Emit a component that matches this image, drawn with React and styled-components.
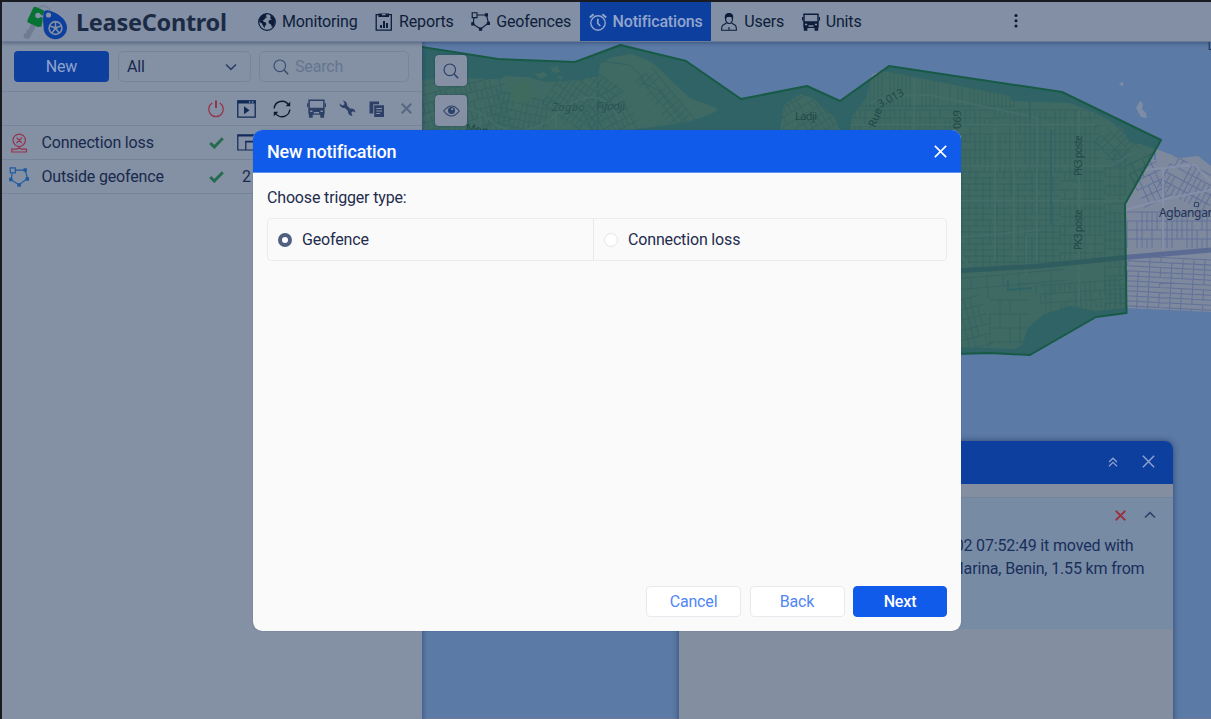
import React from "react";
import styled, { createGlobalStyle } from "styled-components";

const GlobalStyle = createGlobalStyle`
  * { box-sizing: border-box; }
  html, body { margin: 0; padding: 0; }
  body { font-family: Roboto, "Liberation Sans", sans-serif; font-size: 16px; letter-spacing: -0.16px; color: #18294d; overflow: hidden; }
  button, input { font: inherit; letter-spacing: inherit; }
  svg { display: block; flex: none; letter-spacing: 0; }
`;

const c = {
  panel: "#8490a4",
  line: "#75839b",
  ink: "#172a50",
  dark: "#0a1830",
  red: "#96334c",
  green: "#256b4e",
  blue: "#0d3f9e",
};

const Screen = styled.div`
  position: relative;
  width: 1211px;
  height: 719px;
  padding: 2px 0 0 2px;
  background: #1b1b1f;
  display: flex;
  flex-direction: column;
  overflow: hidden;
`;

const Header = styled.header`
  height: 40px;
  flex: none;
  display: flex;
  background: #838fa4;
  border-bottom: 1px solid #6c7b95;
  position: relative;
  z-index: 1;
  box-shadow: 0 1px 4px rgba(20, 40, 80, 0.45);
`;

const Brand = styled.div`
  width: 247px;
  display: flex;
  align-items: center;
  gap: 8px;
  padding-left: 20px;
`;

const BrandName = styled.span`
  font-family: "Noto Sans", sans-serif;
  font-weight: 700;
  font-size: 23.5px;
  line-height: 32px;
  letter-spacing: -0.28px;
  color: #1c2b45;
  margin-top: 1px;
`;

const Nav = styled.nav`
  display: flex;
  width: 620px;
`;

const NavItem = styled.a`
  display: flex;
  align-items: center;
  gap: 6px;
  padding: 0 8.5px 0 9px;
  height: 39px;
  color: ${(p) => (p.$active ? "#93a5cd" : "#0d1d3a")};
  background: ${(p) => (p.$active ? c.blue : "transparent")};
  font-weight: ${(p) => (p.$active ? 500 : 400)};
  white-space: nowrap;
`;

const More = styled.div`
  width: 294px;
  display: flex;
  align-items: center;
  justify-content: center;
  padding-bottom: 1px;
  color: ${c.dark};
`;

const Body = styled.div`
  flex: 1;
  display: flex;
  min-height: 0;
`;

const Side = styled.aside`
  width: 420px;
  flex: none;
  background: ${c.panel};
`;

const Toolbar = styled.div`
  height: 50px;
  display: flex;
  align-items: flex-start;
  padding: 9px 12px 0;
  border-bottom: 1px solid ${c.line};
`;

const NewButton = styled.button`
  width: 95px;
  height: 31px;
  padding: 0;
  border: 0;
  border-radius: 4px;
  background: ${c.blue};
  color: #8fa3cc;
`;

const Field = styled.div`
  width: ${(p) => p.$w}px;
  height: 31px;
  margin-left: ${(p) => p.$ml}px;
  padding: 0 ${(p) => p.$px}px;
  display: flex;
  align-items: center;
  gap: 6px;
  justify-content: ${(p) => (p.$spread ? "space-between" : "flex-start")};
  border: 1px solid #77859c;
  border-radius: 5px;
  color: ${(p) => (p.$muted ? "#66758f" : c.ink)};
`;

const Row = styled.div`
  display: flex;
  align-items: center;
  height: 34px;
  border-bottom: 1px solid ${c.line};
`;

const Lead = styled.div`
  width: 199px;
  display: flex;
  align-items: center;
  padding-left: 7px;
  gap: 12.5px;
`;

const Cell = styled.div`
  width: ${(p) => p.$w}px;
  display: flex;
  justify-content: center;
  color: ${(p) => p.$color || c.dark};
`;

const MapArea = styled.main`
  flex: 1;
  position: relative;
  background: #5b7aa5;
  overflow: hidden;
`;

const MapTools = styled.div`
  position: absolute;
  left: 13px;
  top: 13px;
  display: flex;
  flex-direction: column;
  gap: 9px;
`;

const MapButton = styled.div`
  width: 32px;
  height: 31px;
  border-radius: 4px;
  background: #8590a5;
  color: #2c4169;
  display: flex;
  align-items: center;
  justify-content: center;
  box-shadow: 0 0 2px rgba(20, 40, 80, 0.5);
`;

const SideShade = styled.div`
  position: absolute;
  left: 0;
  top: 0;
  bottom: 0;
  width: 5px;
  background: linear-gradient(to right, rgba(30, 50, 90, 0.3), transparent);
`;

const Alerts = styled.section`
  position: absolute;
  left: 257px;
  top: 399px;
  width: 493.5px;
  height: 300px;
  background: #838fa1;
  border-radius: 8px;
  box-shadow: 0 0 6px rgba(20, 40, 80, 0.6);
`;

const AlertsHead = styled.div`
  height: 43px;
  border-radius: 8px 8px 0 0;
  background: ${c.blue};
  color: #8fa3cc;
  display: flex;
  align-items: center;
  justify-content: flex-end;
  gap: 24px;
  padding: 0 18px 2px 0;
`;

const AlertCard = styled.article`
  margin-top: 13px;
  height: 132px;
  background: #788ba4;
  border-top: 1px solid #71849c;
  color: #182f5c;
`;

const AlertActions = styled.div`
  display: flex;
  justify-content: flex-end;
  align-items: center;
  gap: 17px;
  height: 36px;
  padding: 0 17px 2px 0;
`;

const AlertLine = styled.div`
  height: 22.5px;
  line-height: 23px;
  text-align: right;
  white-space: nowrap;
  padding-right: ${(p) => p.$pad}px;
`;

const Overlay = styled.div`
  position: absolute;
  inset: 0;
  z-index: 5;
  padding: 130px 0 0 253px;
`;

const Dialog = styled.div`
  width: 708px;
  height: 500.5px;
  border-radius: 9px;
  background: #fafafa;
  display: flex;
  flex-direction: column;
  overflow: hidden;
  box-shadow: 0 0 1px rgba(20, 40, 80, 0.6);
`;

const DialogHead = styled.div`
  height: 43px;
  background: #115bea;
  color: #fff;
  display: flex;
  align-items: center;
  justify-content: space-between;
  padding: 0 14px;
  font-size: 18px;
  font-weight: 500;
  border-bottom: 1px solid #5e92f2;
`;

const DialogBody = styled.div`
  flex: 1;
  padding: 14px 14px 0;
  color: #1f2c4d;
`;

const Question = styled.div`
  height: 31px;
  line-height: 21px;
`;

const Options = styled.div`
  display: flex;
  height: 43px;
  border: 1px solid #ececee;
  border-radius: 4px;
`;

const Option = styled.label`
  width: ${(p) => p.$w}px;
  display: flex;
  align-items: center;
  gap: 10px;
  padding-left: 10px;
  border-right: ${(p) => (p.$last ? "0" : "1px solid #e9e9ec")};
`;

const Radio = styled.span`
  width: 14px;
  height: 14px;
  border-radius: 50%;
  background: #fff;
  border: ${(p) => (p.$on ? "4px solid #4f6081" : "1px solid #e3e5ea")};
`;

const DialogFoot = styled.div`
  display: flex;
  justify-content: flex-end;
  gap: 8.5px;
  padding: 0 14px 13.5px;
`;

const Button = styled.button`
  width: ${(p) => (p.$primary ? 94 : 95)}px;
  height: 31.5px;
  padding: 0;
  border-radius: 4px;
  border: 1px solid ${(p) => (p.$primary ? "#115bea" : "#e8e9ee")};
  background: ${(p) => (p.$primary ? "#115bea" : "#fff")};
  color: ${(p) => (p.$primary ? "#fff" : "#5186f5")};
  font-weight: ${(p) => (p.$primary ? 500 : 400)};
`;

/* ---------- icons ---------- */

const Svg = ({ w = 18, h = w, vb, sw = 1.4, children }) => (
  <svg width={w} height={h} viewBox={vb || `0 0 ${w} ${h}`} fill="none" stroke="currentColor" strokeWidth={sw}>
    {children}
  </svg>
);

const Logo = () => (
  <svg width="46" height="36" viewBox="22 3 46 36">
    <circle cx="43" cy="13" r="8" fill="none" stroke="#76839a" strokeWidth="1.8" />
    <path d="M31 22L36 25L29 38L23.5 37L24 33L26.5 32L26.5 29L29 28Z" fill="#6e7b93" />
    <path d="M33.5 6.2Q34.5 5.5 36 6L44 9.5L41.5 25.5L38 26L28 21.5Q27 20.500 27.500 19Z" fill="#067233" />
    <circle cx="38" cy="14.5" r="2.8" fill="#8490a4" />
    <path d="M43.5 12.5Q44 9 47.5 9.2C57 11 67 18 67 26.5A11.7 11.7 0 0 1 43.6 26.5Q42.5 19 43.5 12.5Z" fill={c.blue} />
    <path d="M38 14.5L43 15.5" stroke="#8490a4" strokeWidth="2" />
    <circle cx="48.5" cy="14" r="2.6" fill="#8490a4" />
    <circle cx="55.5" cy="27" r="6.4" fill="none" stroke="#8490a4" strokeWidth="1.6" />
    <circle cx="55.5" cy="27" r="1.8" fill="#8490a4" />
    <path d="M55.5 27V21M55.5 27L61 25M55.5 27L59 32M55.5 27L52 32M55.5 27L50 25" stroke="#8490a4" strokeWidth="1.4" />
  </svg>
);

const GlobeIcon = () => (
  <Svg sw={1.2}>
    <circle cx="9" cy="9" r="8.3" />
    <path d="M1.2 7.500C1.800 4.500 4 1.600 7.500 1L9 1.800L7.500 3L9 4L7 5.500L6 7L4.500 7.300L5.500 8.500L8 9.800L8.400 11.500L7 13L6.500 15.200L5 12.800L3.500 10L1.200 9ZM11.500 1.500L14 2.500L16.600 6L17 9L15.800 12.800L14 14.200L13 11.500L10.800 10.200L10.500 8L12.200 6.800L14 6.500L12 5L12.800 3.600Z" fill="currentColor" stroke="none" />
  </Svg>
);
const ReportIcon = () => (
  <Svg sw={1.3}>
    <path d="M1.2 1.7H16.3V17.2H1.2Z" />
    <path d="M3.500 0.500H14V4H3.500ZM5 12H7V15H5ZM8 8H10V15H8ZM11 10H13V15H11Z" fill="currentColor" stroke="none" />
    <path d="M7 1.6H10.500" stroke={c.panel} />
  </Svg>
);
const GeofenceIcon = ({ size = 19 }) => (
  <svg width={size} height={size} viewBox="0 0 19 19" fill="none" stroke="currentColor" strokeWidth="1.1">
    <path d="M6 3H15.5L17.5 11L9.500 17L2 12L3 6" />
    <path d="M1.200 0.800H6V5.600H1.200Z" />
    <path d="M13.8 1.3H17V4.500H13.8ZM15.800 9.800H19V13H15.800ZM8 15.500H11.2V18.700H8ZM0.200 10.300H3.400V13.500H0.200Z" fill="currentColor" stroke="none" />
  </svg>
);
const AlarmIcon = () => (
  <Svg sw={1.4}>
    <circle cx="9" cy="10" r="7.2" />
    <path d="M8.8 5.8V10.5L11.3 13" strokeWidth="1.7" />
    <path d="M0.8 4.4L4.6 1.2M17.2 4.4L13.4 1.2" strokeWidth="2" />
  </Svg>
);
const UserIcon = () => (
  <Svg sw={1.1}>
    <path d="M5.6 6C5.6 2.5 6.5 1 9 1S12.4 2.5 12.4 6C12.4 8.5 11 10.5 9 10.5S5.6 8.5 5.6 6Z" />
    <path d="M5.4 5C5 2 6.5 0.5 9 0.5S13 2 12.6 5L11.5 3.500H7Z" fill="currentColor" />
    <path d="M6.5 10L2.8 12.2Q1.6 13 1.6 17.2H16.4Q16.400 13 15.2 12.2L11.5 10M9 14V17" />
  </Svg>
);
const BusIcon = ({ w = 18 }) => (
  <Svg w={w} vb="0 0 18 18" sw={1.4}>
    <path d="M2 9V1.2H16V9" />
    <path d="M0.600 4V7.500M17.400 4V7.500" strokeWidth="1.2" />
    <path d="M1.300 8.300H16.700V14.500H16.200V17.700H12.600V15H5.400V17.700H1.800V14.500H1.300Z" fill="currentColor" stroke="none" />
    <path d="M3 11.500H5.200M12.800 11.500H15M6.500 13H11.500" stroke={c.panel} strokeWidth="1.4" />
  </Svg>
);
const SearchIcon = () => (
  <Svg w={16} sw={1.2}>
    <circle cx="6.8" cy="6.8" r="5.8" />
    <path d="M11 11L15.2 15.2" strokeWidth="1.6" />
  </Svg>
);
const PowerIcon = () => (
  <Svg w={18} sw={1.3}>
    <path d="M5.2 3A7.3 7.3 0 1 0 12.8 3" />
    <path d="M9 0.5V8" strokeWidth="2" />
  </Svg>
);
const PlayWindowIcon = () => (
  <Svg w={19} h={18} sw={1.3}>
    <path d="M0.8 1H18.2V17.2H0.8Z" />
    <path d="M0.5 0.5H18.5V3.4H0.5ZM7 6.2L12.500 10.3L7 14.2Z" fill="currentColor" stroke="none" />
    <path d="M12 2H13.4M15 2H16.4" stroke={c.panel} />
  </Svg>
);
const RefreshIcon = () => (
  <Svg w={18} sw={1.4}>
    <path d="M1.2 8.5A7.8 7.8 0 0 1 15.600 5M16.8 9.5A7.8 7.8 0 0 1 2.400 13" />
    <path d="M17.2 1.800V6.300H12.700ZM0.8 16.200V11.700H5.300Z" fill="currentColor" stroke="none" />
  </Svg>
);
const WrenchIcon = () => (
  <Svg w={17} vb="0 0 17 17">
    <path d="M3.800 0.600A4.600 4.600 0 0 1 8.200 5.800L11.200 8.700A4.200 4.200 0 0 1 16.500 12.500L14 11.300L12.200 12.800L13.500 15.800A4.200 4.200 0 0 1 9 11L6 7.900A4.600 4.600 0 0 1 0.500 3.500L3.200 5.500L5.200 4.800L5.500 3Z" fill="currentColor" stroke="none" />
  </Svg>
);
const CopyIcon = () => (
  <Svg w={16}>
    <path d="M0.5 0.5H10V3.2H4.3V12.5H0.5ZM5.2 4.2H15V16H5.2Z" fill="currentColor" stroke="none" />
    <path d="M7.3 7.5H13M7.3 10H13M7.3 12.5H11" stroke={c.panel} strokeWidth="1" />
  </Svg>
);
const Cross = ({ size = 12, sw = 1.6 }) => (
  <Svg w={size} vb="0 0 12 12" sw={sw}>
    <path d="M0.8 0.8L11.2 11.2M11.2 0.8L0.8 11.2" />
  </Svg>
);
const CheckIcon = () => (
  <Svg w={15} h={12} sw={3}>
    <path d="M1.2 6L5.3 10L13.8 1.3" />
  </Svg>
);
const PopupIcon = () => (
  <Svg w={19} h={17} sw={1.2}>
    <path d="M0.8 1H18.2V16H0.8ZM8.8 15.5V7.5H18" />
    <path d="M0.5 0.5H18.5V2.4H0.5ZM8.2 6.8H18V8.600H8.2Z" fill="currentColor" stroke="none" />
  </Svg>
);
const LossIcon = () => (
  <Svg w={18} h={20} sw={1.2}>
    <circle cx="9.2" cy="7.3" r="6.2" />
    <path d="M6.5 4.6L12 10M12 4.6L6.5 10M9.2 13.5V16M1.8 16.2H7L9.2 14.5L11.4 16.2H16.5V19H1.8Z" />
  </Svg>
);
const Chevron = ({ up, w = 12 }) => (
  <Svg w={w} h={8} vb="0 0 12 8" sw={1.6}>
    <path d={up ? "M1 6.5L6 1.7L11 6.5" : "M1 1.5L6 6.3L11 1.5"} />
  </Svg>
);
const EyeIcon = () => (
  <Svg w={17} h={12} sw={1.1}>
    <path d="M0.7 6Q8.5 -4 16.3 6Q8.5 16 0.7 6Z" />
    <circle cx="8.5" cy="5.5" r="3.5" fill="currentColor" stroke="none" />
    <circle cx="9.2" cy="4.2" r="1.1" fill="#8590a5" stroke="none" />
  </Svg>
);

/* ---------- map ---------- */

const hatch = (x, y, w, h, gx, gy, seed = 1) => {
  let d = "";
  let s = seed;
  const rnd = () => (s = (s * 16807) % 2147483647) / 2147483647;
  for (let j = 0; j < h; j += gy) {
    d += `M${x} ${y + j}h${w}`;
    for (let i = 0; i < w; i += gx) if (rnd() > 0.2) d += `M${x + i} ${y + j}v${Math.min(gy, h - j)}`;
  }
  return d;
};

const fence =
  "M415 46L498 59L575 62L620.5 45L686 61L741 99L807 86L840 101L889 66L1062 92L1161 140L1125 204L1126.5 313L1096 317L1030 355L990 353L955 354L415 354Z";

const land =
  "M422 80L450 78L500 79L505 76L528 77L545 82L580 80L598 76L600 64L612 57L632 54L650 61L664 73L676 85L690 98L716 108L718 114L700 130L780 130L784 105L800 94L814 98L822 108L834 116L840 130H850L852 116L866 98L872 74L884 71L920 78L960 86L1010 96L1012 101L1070 103L1094 112L1122 128L1130 142L1140 144L1159 150L1180 158L1198 156L1211 166V312L1126 308L1095 311L1070 306L1044 314L1028 328L1022 345L1015 349L955 347L422 350Z";

const CityMap = () => (
  <svg width="789" height="677" viewBox="422 42 789 677">
    <defs>
      <clipPath id="land"><path d={land} /></clipPath>
    </defs>
    <path d={land} fill="#7e899d" />
    <path d="M1119 85l4-4v5ZM1136 108l4-7l3 3l-1 5l4 4l1 5l-6-1Z" fill="#7e8da6" />
    <g clipPath="url(#land)" fill="none" stroke="#62719a" strokeWidth="1">
      <g strokeOpacity="0.72">
        <path transform="rotate(-14 450 110)" d={hatch(400, 80, 110, 70, 5, 9, 3)} />
        <path transform="rotate(12 540 110)" d={hatch(492, 100, 60, 60, 5, 8, 5)} />
        <path transform="rotate(35 580 110)" d={hatch(545, 70, 60, 60, 5, 8, 7)} />
        <path transform="rotate(-28 610 110)" d={hatch(585, 92, 45, 50, 5, 8, 9)} />
        <path transform="rotate(50 670 105)" d={hatch(630, 95, 80, 22, 6, 8, 11)} />
        <path transform="rotate(-30 805 115)" d={hatch(780, 90, 50, 50, 5, 8, 12)} />
        <path d={hatch(850, 68, 165, 40, 4, 38, 13)} />
        <path d={hatch(850, 110, 250, 62, 5, 8, 17)} />
        <path d={hatch(955, 172, 105, 96, 7, 6, 19)} />
        <path d={hatch(1105, 150, 21, 160, 5, 9, 23)} />
        <path d={hatch(1060, 172, 45, 90, 5, 9, 29)} />
        <path transform="rotate(45 1115 145)" d={hatch(1098, 130, 36, 28, 5, 9, 31)} />
        <path transform="rotate(-5 1000 280)" d={hatch(955, 275, 110, 22, 16, 11, 37)} />
        <path transform="rotate(-4 1060 290)" d={hatch(1040, 284, 84, 26, 5, 9, 41)} />
        <path transform="rotate(-14 970 320)" d={hatch(945, 298, 42, 60, 6, 10, 43)} />
        <path d={hatch(990, 300, 40, 45, 10, 14, 44)} />
      </g>
      <g clipPath="none">
        <path transform="rotate(3 1170 280)" d={hatch(1127, 258, 95, 54, 11, 5, 47)} />
        <path transform="rotate(-25 1150 180)" d={hatch(1134, 157, 30, 46, 6, 9, 53)} />
        <path transform="rotate(28 1190 180)" d={hatch(1165, 166, 55, 36, 5, 9, 59)} />
        <path d={hatch(1127, 212, 90, 36, 5, 9, 61)} />
      </g>
      <path d="M598 75V130M600 61L630 65L642 76L643 82L660 92L680 118L690 130" strokeOpacity="0.9" />
      <g stroke="#8791ac" strokeWidth="2" strokeOpacity="0.85">
        <path d="M870 103Q890 94 930 95L1000 110L1037 118V262M850 125H1095M914 78V130M995 125V260M1014 125V260M955 166H1110L1135 152M955 201H1125M1079 110V305M1125 210L1165 199L1211 190M1163 168V250M1145 170L1195 165L1211 182M1165 168L1190 164" />
        <path d="M422 120Q460 95 490 120T560 112T620 120M480 115V130M556 112V130M955 238L1040 230M1026 236V275M955 250L972 268" />
      </g>
      <path d="M955 271L1040 266L1130 257L1211 250" stroke="#5c6b94" strokeWidth="5" />
      <path d="M1051 130V225M1008 280V290L1032 288M1030 99V120M1155 150V160" stroke="#5b7aa5" strokeWidth="2" />
    </g>
    <path d="M510 85l18-5l4 20l-18 4Z" fill="#7d8d92" opacity="0.9" />
    <path d="M630 130L690 122L725 108L715 118L700 130Z" fill="#5b7aa5" />
    <path d="M534 74l10-2l4 4l-8 3ZM550 68l8-2l2 6l-6 1ZM556 77l6-1v4Z" fill="#7e899d" />
    <path d={fence} fill="rgb(11,80,51)" fillOpacity="0.55" stroke="#175a45" strokeWidth="2" strokeLinejoin="round" />
    <g fontFamily="'Noto Sans', sans-serif" fontSize="11" fill="#1f4846">
      <g fill="#2a5454" fontStyle="italic" fontSize="11.500">
        <text x="552" y="111" textLength="33">Zogbo</text>
        <text x="596" y="110" textLength="29">Fifadji</text>
      </g>
      <text x="795" y="120" textLength="22">Ladji</text>
      <text x="465" y="131" transform="rotate(10 465 131)">Men</text>
      <text transform="translate(875 128) rotate(-68)">Rue</text>
      <text transform="translate(880 108) rotate(-28)">3.013</text>
      <text transform="translate(961 129) rotate(-90)">069</text>
      <text transform="translate(1082 176) rotate(-90)" fontSize="10" textLength="41">PK3 poste</text>
      <text transform="translate(1082 250) rotate(-90)" fontSize="10" textLength="41">PK3 poste</text>
      <g fill="#233354" fontSize="12">
        <text x="1159" y="217" textLength="56">Agbangan</text>
        <text x="1207.500" y="50">D</text>
      </g>
    </g>
    <path d="M1194.500 202.500h4v4h-4Z" fill="none" stroke="#344668" />
    <path d="M422 718.500H1211" stroke="#6b7c98" />
  </svg>
);

const navItems = [
  { label: "Monitoring", icon: <GlobeIcon /> },
  { label: "Reports", icon: <ReportIcon /> },
  { label: "Geofences", icon: <GeofenceIcon /> },
  { label: "Notifications", icon: <AlarmIcon />, active: true },
  { label: "Users", icon: <UserIcon /> },
  { label: "Units", icon: <BusIcon /> },
];

export default function App() {
  return (
    <>
      <GlobalStyle />
      <Screen>
        <Header>
          <Brand>
            <Logo />
            <BrandName>LeaseControl</BrandName>
          </Brand>
          <Nav>
            {navItems.map((n) => (
              <NavItem key={n.label} $active={n.active}>
                {n.icon}
                {n.label}
              </NavItem>
            ))}
          </Nav>
          <More>
            <svg width="4" height="16" viewBox="0 0 4 16" fill="currentColor">
              <circle cx="2" cy="2.500" r="1.500" />
              <circle cx="2" cy="7.700" r="1.500" />
              <circle cx="2" cy="12.900" r="1.500" />
            </svg>
          </More>
        </Header>
        <Body>
          <Side>
            <Toolbar>
              <NewButton>New</NewButton>
              <Field $w={133} $ml={9} $px={8} $spread>
                All
                <Cell $w={22} $color="#2c4068"><Chevron w={12} /></Cell>
              </Field>
              <Field $w={150} $ml={8} $px={13} $muted>
                <Cell $w={16} $color="#3a4c70"><SearchIcon /></Cell>
                Search
              </Field>
            </Toolbar>
            <Row>
              <Lead />
              <Cell $w={30} $color={c.red}><PowerIcon /></Cell>
              <Cell $w={31} $color="#112a58"><PlayWindowIcon /></Cell>
              <Cell $w={40}><RefreshIcon /></Cell>
              <Cell $w={28} $color="#2c3f66"><BusIcon w={19} /></Cell>
              <Cell $w={34} $color="#2c4068"><WrenchIcon /></Cell>
              <Cell $w={26} $color="#2c4068"><CopyIcon /></Cell>
              <Cell $w={32} $color="#5a6883"><Cross size={11} sw={2.4} /></Cell>
            </Row>
            <Row>
              <Lead>
                <Cell $w={20} $color={c.red}><LossIcon /></Cell>
                Connection loss
              </Lead>
              <Cell $w={30} $color={c.green}><CheckIcon /></Cell>
              <Cell $w={31} $color="#112a58"><PopupIcon /></Cell>
            </Row>
            <Row>
              <Lead>
                <Cell $w={20} $color="#1d5a9e"><GeofenceIcon size={20} /></Cell>
                Outside geofence
              </Lead>
              <Cell $w={30} $color={c.green}><CheckIcon /></Cell>
              <Cell $w={31} $color={c.ink}>2</Cell>
            </Row>
          </Side>
          <MapArea>
            <CityMap />
            <SideShade />
            <MapTools>
              <MapButton><SearchIcon /></MapButton>
              <MapButton><EyeIcon /></MapButton>
            </MapTools>
            <Alerts>
              <AlertsHead>
                <Svg w={10} h={10} sw={1.2}>
                  <path d="M1 5L5 1.200L9 5M1 9.200L5 5.400L9 9.200" />
                </Svg>
                <Cross size={13} sw={1.3} />
              </AlertsHead>
              <AlertCard>
                <AlertActions>
                  <Cell $w={12} $color="#99333f"><Cross size={11} sw={2} /></Cell>
                  <Cell $w={12} $color="#2c4068"><Chevron up w={12} /></Cell>
                </AlertActions>
                <AlertLine $pad={39}>02 07:52:49 it moved with</AlertLine>
                <AlertLine $pad={28}>Marina, Benin, 1.55 km from</AlertLine>
              </AlertCard>
            </Alerts>
          </MapArea>
        </Body>
        <Overlay>
          <Dialog>
            <DialogHead>
              New notification
              <Cross size={13} sw={1.500} />
            </DialogHead>
            <DialogBody>
              <Question>Choose trigger type:</Question>
              <Options>
                <Option $w={326}><Radio $on />Geofence</Option>
                <Option $w={352} $last><Radio />Connection loss</Option>
              </Options>
            </DialogBody>
            <DialogFoot>
              <Button>Cancel</Button>
              <Button>Back</Button>
              <Button $primary>Next</Button>
            </DialogFoot>
          </Dialog>
        </Overlay>
      </Screen>
    </>
  );
}
